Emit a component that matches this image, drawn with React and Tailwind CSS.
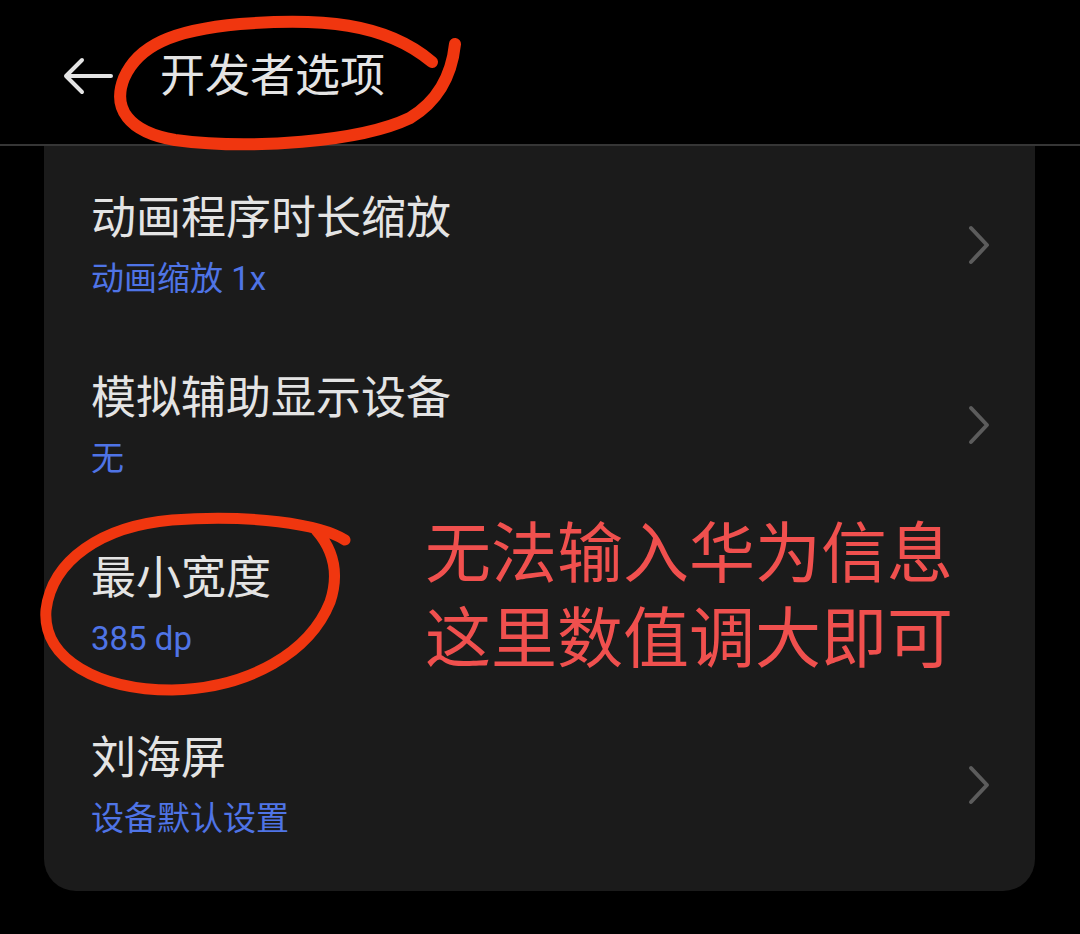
import React from "react";

const rows = [
  { title: "动画程序时长缩放", value: "动画缩放 1x", arrow: true },
  { title: "模拟辅助显示设备", value: "无", arrow: true },
  { title: "最小宽度", value: "385 dp", arrow: false },
  { title: "刘海屏", value: "设备默认设置", arrow: true },
];

function Chevron() {
  return (
    <svg width="24" height="40" viewBox="0 0 24 40" fill="none" className="mt-[-6px]">
      <path
        d="M4 3 L20 20 L4 37"
        stroke="#5c5c5c"
        strokeWidth="4"
        strokeLinecap="round"
        strokeLinejoin="round"
      />
    </svg>
  );
}

function Row({ title, value, arrow }) {
  return (
    <div className="h-[180px] flex items-center pl-[47px] pr-[44px]">
      <div className="flex-1 flex flex-col">
        <div className="text-[45px] leading-[62px] text-[#e4e4e4]">{title}</div>
        <div className="text-[33px] leading-[58px] text-[#4f74e6]">{value}</div>
      </div>
      {arrow && <Chevron />}
    </div>
  );
}

export default function App() {
  return (
    <div
      className="relative w-[1080px] h-[934px] bg-black overflow-hidden"
      style={{ fontFamily: 'Roboto, "Noto Sans CJK SC", sans-serif' }}
    >
      {/* top bar */}
      <div className="h-[144px] flex items-center pl-[63px] gap-[47px]">
        <svg width="50" height="38" viewBox="0 0 50 38" fill="none" className="mt-[8px]">
          <path
            d="M48 19 H3 M19 3 L3 19 L19 35"
            stroke="#e4e4e4"
            strokeWidth="4"
            strokeLinecap="round"
            strokeLinejoin="round"
          />
        </svg>
        <div className="text-[45px] leading-none text-[#e4e4e4] pt-[8px]">开发者选项</div>
      </div>
      <div className="h-[2px] bg-[#363636]" />

      {/* settings card */}
      <div className="ml-[44px] mr-[45px] bg-[#1b1b1b] rounded-b-[32px] pt-[12px] pb-[13px]">
        {rows.map((r) => (
          <Row key={r.title} {...r} />
        ))}
      </div>

      {/* annotation marks */}
      <svg
        className="absolute inset-0 pointer-events-none"
        width="1080"
        height="934"
        viewBox="0 0 1080 934"
        fill="none"
      >
        <path
          d="M455 44 C452 72 440 100 410 118 C360 142 250 150 175 140 C128 132 112 108 124 78 C138 46 172 30 240 24 C320 18 385 22 432 62"
          stroke="#f0360f"
          strokeWidth="12"
          strokeLinecap="round"
          strokeLinejoin="round"
        />
        <path
          d="M345 540 C320 524 250 514 172 520 C102 526 52 560 46 610 C42 660 100 690 172 690 C250 688 310 652 330 602 C340 572 332 548 316 530"
          stroke="#f0360f"
          strokeWidth="11"
          strokeLinecap="round"
          strokeLinejoin="round"
        />
      </svg>

      <div className="absolute left-[425px] top-[512px] text-[66px] leading-[85px] text-[#f0504e] whitespace-nowrap">
        <div>无法输入华为信息</div>
        <div>这里数值调大即可</div>
      </div>
    </div>
  );
}
